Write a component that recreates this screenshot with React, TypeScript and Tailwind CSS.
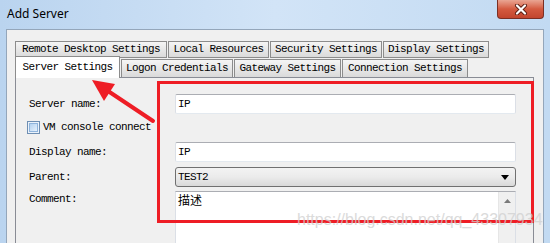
const backTabs = [
  { label: "Remote Desktop Settings", w: "w-[152px]" },
  { label: "Local Resources", w: "w-[101px]" },
  { label: "Security Settings", w: "w-[112px]" },
  { label: "Display Settings", w: "w-[106px]" },
];

const frontTabs = [
  { label: "Logon Credentials", w: "w-[112px]" },
  { label: "Gateway Settings", w: "w-[107px]" },
  { label: "Connection Settings", w: "w-[126px]" },
];

const mono = "font-['Liberation_Mono',monospace] text-[11px] tracking-[-0.6px] text-black";

function TextBox({ value }: { value: string }) {
  return (
    <div className="flex h-[20px] w-[341px] items-center rounded-[2px] border border-[#dbdfe6] border-t-[#abadb3] border-b-[#e3e9ef] bg-white pl-[2px]">
      <span className={`${mono} leading-[13px]`}>{value}</span>
    </div>
  );
}

function Label({ children }: { children: string }) {
  return <span className={`${mono} w-[146px] shrink-0 leading-[13px]`}>{children}</span>;
}

export default function App() {
  return (
    <div className="relative h-[243px] w-[550px] overflow-hidden bg-gradient-to-r from-[#bad4ef] via-[#d2e4f7] to-[#c2daf2]">
      {/* title bar */}
      <div className="flex h-[29px] items-start justify-between">
        <span className="pl-[7px] pt-[6px] font-['Noto_Sans',sans-serif] text-[12px] leading-[16px] text-black">
          Add Server
        </span>
        <div className="mr-[6px] flex h-[19px] w-[47px] items-center justify-center rounded-b-[4px] border border-t-0 border-[#7b2f24] bg-gradient-to-b from-[#e9a593] via-[#d45a40] to-[#c2452e]">
          <svg width="14" height="11" viewBox="0 0 14 11">
            <path d="M3 1.5 L11 9.5 M11 1.5 L3 9.5" stroke="#5b1d12" strokeWidth="4" strokeLinecap="round" />
            <path d="M3 1.5 L11 9.5 M11 1.5 L3 9.5" stroke="#ffffff" strokeWidth="2.2" strokeLinecap="round" />
          </svg>
        </div>
      </div>

      {/* client area */}
      <div className="mx-[6px] h-[220px] w-[538px] border border-b-0 border-[#94a6ba] bg-[#f0f0f0] pl-[8px] pt-[11px]">
        <div className="flex h-[17px] gap-[1px]">
          {backTabs.map((t) => (
            <div
              key={t.label}
              className={`${t.w} flex h-full items-center justify-center border border-[#8c8c8c] bg-gradient-to-b from-[#f5f5f5] to-[#dadada]`}
            >
              <span className={`${mono} leading-[13px]`}>{t.label}</span>
            </div>
          ))}
        </div>
        <div className="flex h-[19px] items-end gap-[1px]">
          <div className="relative z-10 -mb-px flex h-[22px] w-[105px] items-start justify-center border border-b-0 border-[#8c8c8c] bg-white pt-[4px]">
            <span className={`${mono} leading-[13px]`}>Server Settings</span>
          </div>
          {frontTabs.map((t) => (
            <div
              key={t.label}
              className={`${t.w} flex h-[18px] items-center justify-center border border-b-0 border-[#8c8c8c] bg-gradient-to-b from-[#f5f5f5] to-[#dadada]`}
            >
              <span className={`${mono} leading-[13px]`}>{t.label}</span>
            </div>
          ))}
        </div>

        {/* tab page */}
        <div className="h-[180px] w-[519px] border border-[#898c95] bg-[#f0f0f0] pl-[13px] pt-[16px]">
          <div className="flex h-[20px] items-center">
            <Label>Server name:</Label>
            <TextBox value="IP" />
          </div>
          <div className="flex h-[28px] items-start pt-[7px]">
            <div className="-ml-[2px] mr-[3px] h-[13px] w-[13px] border border-[#6f8fb3] bg-[#eaf2fb] p-[1px]">
              <div className="h-full w-full border border-[#8fb4dc] bg-gradient-to-br from-[#b4d2f0] to-[#e6f1fc]" />
            </div>
            <span className={`${mono} leading-[13px]`}>VM console connect</span>
          </div>
          <div className="flex h-[20px] items-center">
            <Label>Display name:</Label>
            <TextBox value="IP" />
          </div>
          <div className="mt-[5px] flex h-[20px] items-center">
            <Label>Parent:</Label>
            <div className="flex h-[20px] w-[341px] items-center justify-between rounded-[3px] border border-[#707070] bg-gradient-to-b from-[#f3f3f3] via-[#ebebeb] to-[#d9d9d9] pl-[2px] pr-[6px]">
              <span className={`${mono} leading-[13px]`}>TEST2</span>
              <svg width="8" height="5" viewBox="0 0 8 5">
                <path d="M0 0 H8 L4 5 Z" fill="#000" />
              </svg>
            </div>
          </div>
          <div className="mt-[4px] flex items-start">
            <span className={`${mono} w-[146px] shrink-0 pt-[2px] leading-[13px]`}>Comment:</span>
            <div className="flex h-[60px] w-[341px] justify-between border border-[#dbdfe6] border-t-[#abadb3] bg-white">
              <span className="pl-[2px] pt-[1px] font-['Noto_Sans_CJK_SC',sans-serif] text-[12px] leading-[14px] text-black">
                描述
              </span>
              <div className="flex w-[17px] justify-center border-l border-[#e6e6e6] bg-[#f0f0f0] pt-[7px]">
                <svg width="7" height="4" viewBox="0 0 7 4">
                  <path d="M0 4 L3.5 0 L7 4 Z" fill="#7a7a7a" />
                </svg>
              </div>
            </div>
          </div>
        </div>
      </div>

      {/* annotation overlays */}
      <div className="absolute left-[157px] top-[81px] h-[142px] w-[377px] border-[3px] border-[#ee1d25]" />
      <svg className="absolute left-0 top-0" width="550" height="243" viewBox="0 0 550 243">
        <path d="M153 121 L108 91" stroke="#ee1d25" strokeWidth="4" strokeLinecap="round" />
        <path d="M92 80 L115 84 L104 101 Z" fill="#ee1d25" />
      </svg>
      <span className="absolute left-[297px] top-[212px] font-['Liberation_Sans',sans-serif] text-[16px] leading-[16px] text-[#cfcfcf] opacity-75">
        https://blog.csdn.net/qq_43307934
      </span>
    </div>
  );
}
